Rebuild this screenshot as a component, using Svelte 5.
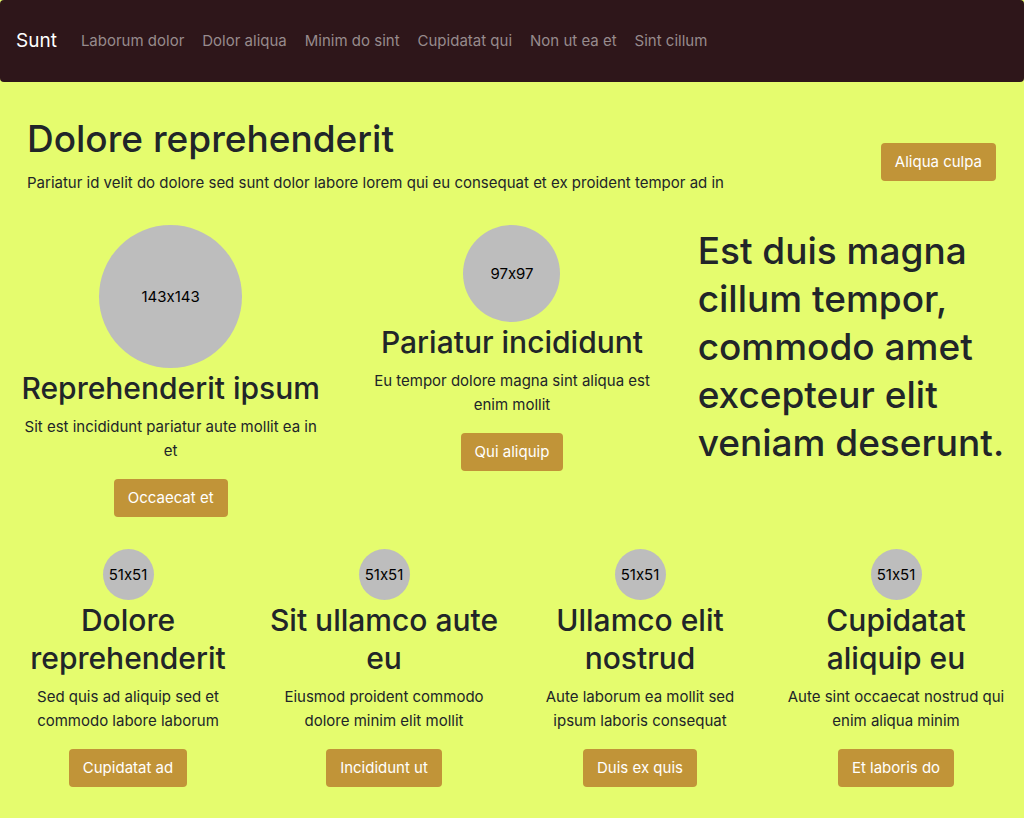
<script>
  const links = ['Laborum dolor', 'Dolor aliqua', 'Minim do sint', 'Cupidatat qui', 'Non ut ea et', 'Sint cillum'];

  const features = [
    { size: 143, title: 'Reprehenderit ipsum', text: 'Sit est incididunt pariatur aute mollit ea in et', action: 'Occaecat et' },
    { size: 97, title: 'Pariatur incididunt', text: 'Eu tempor dolore magna sint aliqua est enim mollit', action: 'Qui aliquip' }
  ];

  const cards = [
    { size: 51, title: 'Dolore reprehenderit', text: 'Sed quis ad aliquip sed et commodo labore laborum', action: 'Cupidatat ad' },
    { size: 51, title: 'Sit ullamco aute eu', text: 'Eiusmod proident commodo dolore minim elit mollit', action: 'Incididunt ut' },
    { size: 51, title: 'Ullamco elit nostrud', text: 'Aute laborum ea mollit sed ipsum laboris consequat', action: 'Duis ex quis' },
    { size: 51, title: 'Cupidatat aliquip eu', text: 'Aute sint occaecat nostrud qui enim aliqua minim', action: 'Et laboris do' }
  ];
</script>

{#snippet card(item)}
  <article class="card">
    <div class="circle" style="width: {item.size}px; height: {item.size}px">{item.size}x{item.size}</div>
    <h2>{item.title}</h2>
    <p>{item.text}</p>
    <button type="button">{item.action}</button>
  </article>
{/snippet}

<div class="page">
  <nav>
    <a class="brand" href="#top">Sunt</a>
    <ul>
      {#each links as link}
        <li><a href="#top">{link}</a></li>
      {/each}
    </ul>
  </nav>

  <main>
    <header>
      <div class="intro">
        <h1>Dolore reprehenderit</h1>
        <p>Pariatur id velit do dolore sed sunt dolor labore lorem qui eu consequat et ex proident tempor ad in</p>
      </div>
      <button type="button">Aliqua culpa</button>
    </header>

    <section class="row thirds">
      {#each features as item}
        {@render card(item)}
      {/each}
      <h1 class="statement">Est duis magna cillum tempor, commodo amet excepteur elit veniam deserunt.</h1>
    </section>

    <section class="row quarters">
      {#each cards as item}
        {@render card(item)}
      {/each}
    </section>
  </main>
</div>

<style>
  :global(body) {
    margin: 0;
    background: #e5fc6e;
  }

  .page {
    color: #212529;
    font: 400 15px/24px Inter, "Liberation Sans", sans-serif;
    font-feature-settings: "calt" 0;
  }

  nav {
    display: flex;
    align-items: center;
    gap: 24px;
    box-sizing: border-box;
    min-height: 82px;
    padding: 8px 16px;
    border-radius: 4px;
    background: #2e161a;
  }

  nav a {
    color: #978b8d;
    text-decoration: none;
  }

  nav .brand {
    color: #fff;
    font-size: 19px;
  }

  ul {
    display: flex;
    flex-wrap: wrap;
    gap: 18px;
    margin: 0;
    padding: 0;
    list-style: none;
  }

  main {
    padding: 33px 0 31px;
  }

  header {
    display: flex;
    align-items: center;
    justify-content: space-between;
    gap: 24px;
    padding: 0 28px 0 27px;
  }

  h1,
  h2,
  p {
    margin: 0;
  }

  h1 {
    font-size: 37px;
    font-weight: 500;
    line-height: 48px;
  }

  h2 {
    margin-bottom: 8px;
    font-size: 30px;
    font-weight: 500;
    line-height: 38px;
  }

  .intro {
    padding-bottom: 14px;
  }

  .intro h1 {
    margin-bottom: 8px;
  }

  button {
    height: 38px;
    padding: 0 14px;
    border: 0;
    border-radius: 4px;
    background: #c19438;
    color: #fff;
    font: inherit;
    white-space: nowrap;
    cursor: pointer;
  }

  .row {
    display: grid;
  }

  .thirds {
    grid-template-columns: repeat(3, minmax(0, 1fr));
    margin-top: 16px;
  }

  .quarters {
    grid-template-columns: repeat(4, minmax(0, 1fr));
    margin-top: 32px;
  }

  .card {
    display: flex;
    flex-direction: column;
    align-items: center;
    padding: 0 16px;
    text-align: center;
  }

  .quarters .card {
    padding: 0 12px;
  }

  .card p {
    margin-bottom: 16px;
  }

  .circle {
    display: flex;
    align-items: center;
    justify-content: center;
    margin-bottom: 1px;
    border-radius: 50%;
    background: #bdbdbd;
    color: #000;
  }

  .statement {
    padding: 2px 15px;
  }
</style>
